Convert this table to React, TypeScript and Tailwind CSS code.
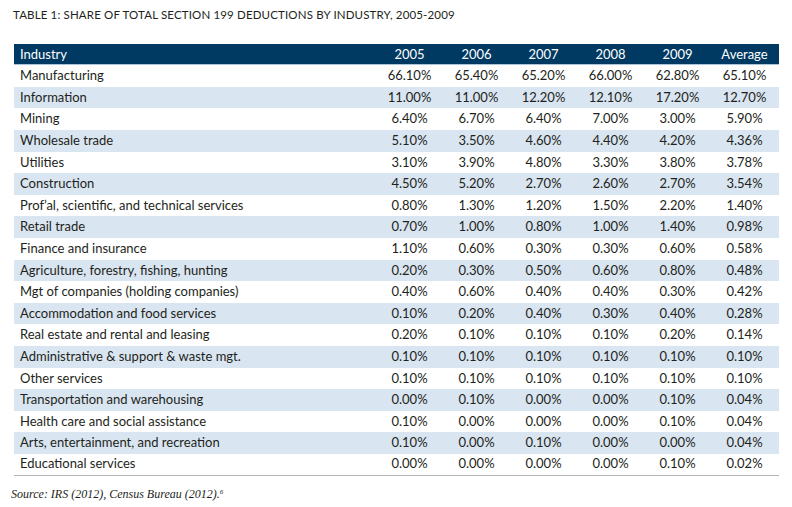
const years = ["2005", "2006", "2007", "2008", "2009", "Average"];

const rows: [string, string[]][] = [
  ["Manufacturing", ["66.10%", "65.40%", "65.20%", "66.00%", "62.80%", "65.10%"]],
  ["Information", ["11.00%", "11.00%", "12.20%", "12.10%", "17.20%", "12.70%"]],
  ["Mining", ["6.40%", "6.70%", "6.40%", "7.00%", "3.00%", "5.90%"]],
  ["Wholesale trade", ["5.10%", "3.50%", "4.60%", "4.40%", "4.20%", "4.36%"]],
  ["Utilities", ["3.10%", "3.90%", "4.80%", "3.30%", "3.80%", "3.78%"]],
  ["Construction", ["4.50%", "5.20%", "2.70%", "2.60%", "2.70%", "3.54%"]],
  ["Prof’al, scientific, and technical services", ["0.80%", "1.30%", "1.20%", "1.50%", "2.20%", "1.40%"]],
  ["Retail trade", ["0.70%", "1.00%", "0.80%", "1.00%", "1.40%", "0.98%"]],
  ["Finance and insurance", ["1.10%", "0.60%", "0.30%", "0.30%", "0.60%", "0.58%"]],
  ["Agriculture, forestry, fishing, hunting", ["0.20%", "0.30%", "0.50%", "0.60%", "0.80%", "0.48%"]],
  ["Mgt of companies (holding companies)", ["0.40%", "0.60%", "0.40%", "0.40%", "0.30%", "0.42%"]],
  ["Accommodation and food services", ["0.10%", "0.20%", "0.40%", "0.30%", "0.40%", "0.28%"]],
  ["Real estate and rental and leasing", ["0.20%", "0.10%", "0.10%", "0.10%", "0.20%", "0.14%"]],
  ["Administrative & support & waste mgt.", ["0.10%", "0.10%", "0.10%", "0.10%", "0.10%", "0.10%"]],
  ["Other services", ["0.10%", "0.10%", "0.10%", "0.10%", "0.10%", "0.10%"]],
  ["Transportation and warehousing", ["0.00%", "0.10%", "0.00%", "0.00%", "0.10%", "0.04%"]],
  ["Health care and social assistance", ["0.10%", "0.00%", "0.00%", "0.00%", "0.10%", "0.04%"]],
  ["Arts, entertainment, and recreation", ["0.10%", "0.00%", "0.10%", "0.00%", "0.00%", "0.04%"]],
  ["Educational services", ["0.00%", "0.00%", "0.00%", "0.00%", "0.10%", "0.02%"]],
];

export default function App() {
  return (
    <div className="w-[792px] h-[507px] bg-white text-[#231f20] font-['Lato',sans-serif]">
      <div className="pt-[6px] pl-[13px] text-[11.5px] tracking-[0.15px]">
        TABLE 1: SHARE OF TOTAL SECTION 199 DEDUCTIONS BY INDUSTRY, 2005-2009
      </div>
      <div className="mt-[21px] ml-[14px] w-[765px] text-[13px]">
        <div className="flex h-[21px] items-center bg-[#003a63] text-white border-b border-[#a9c4dc]">
          <div className="w-[362px] pl-[6px]">Industry</div>
          {years.map((y) => (
            <div key={y} className="w-[67px] text-center">
              {y}
            </div>
          ))}
        </div>
        {rows.map(([name, vals], i) => (
          <div
            key={name}
            className={`flex h-[21.6px] items-center ${i % 2 === 1 ? "bg-[#d9e5f0]" : "bg-white"} ${
              i === rows.length - 1 ? "border-b border-[#b3b3b3]" : ""
            }`}
          >
            <div className="w-[362px] pl-[6px]">{name}</div>
            {vals.map((v, j) => (
              <div key={j} className="w-[67px] text-center">
                {v}
              </div>
            ))}
          </div>
        ))}
      </div>
      <div className="mt-[9px] ml-[11px] text-[12px] italic font-['Liberation_Serif',serif]">
        Source: IRS (2012), Census Bureau (2012).<sup className="text-[7px]">6</sup>
      </div>
    </div>
  );
}
